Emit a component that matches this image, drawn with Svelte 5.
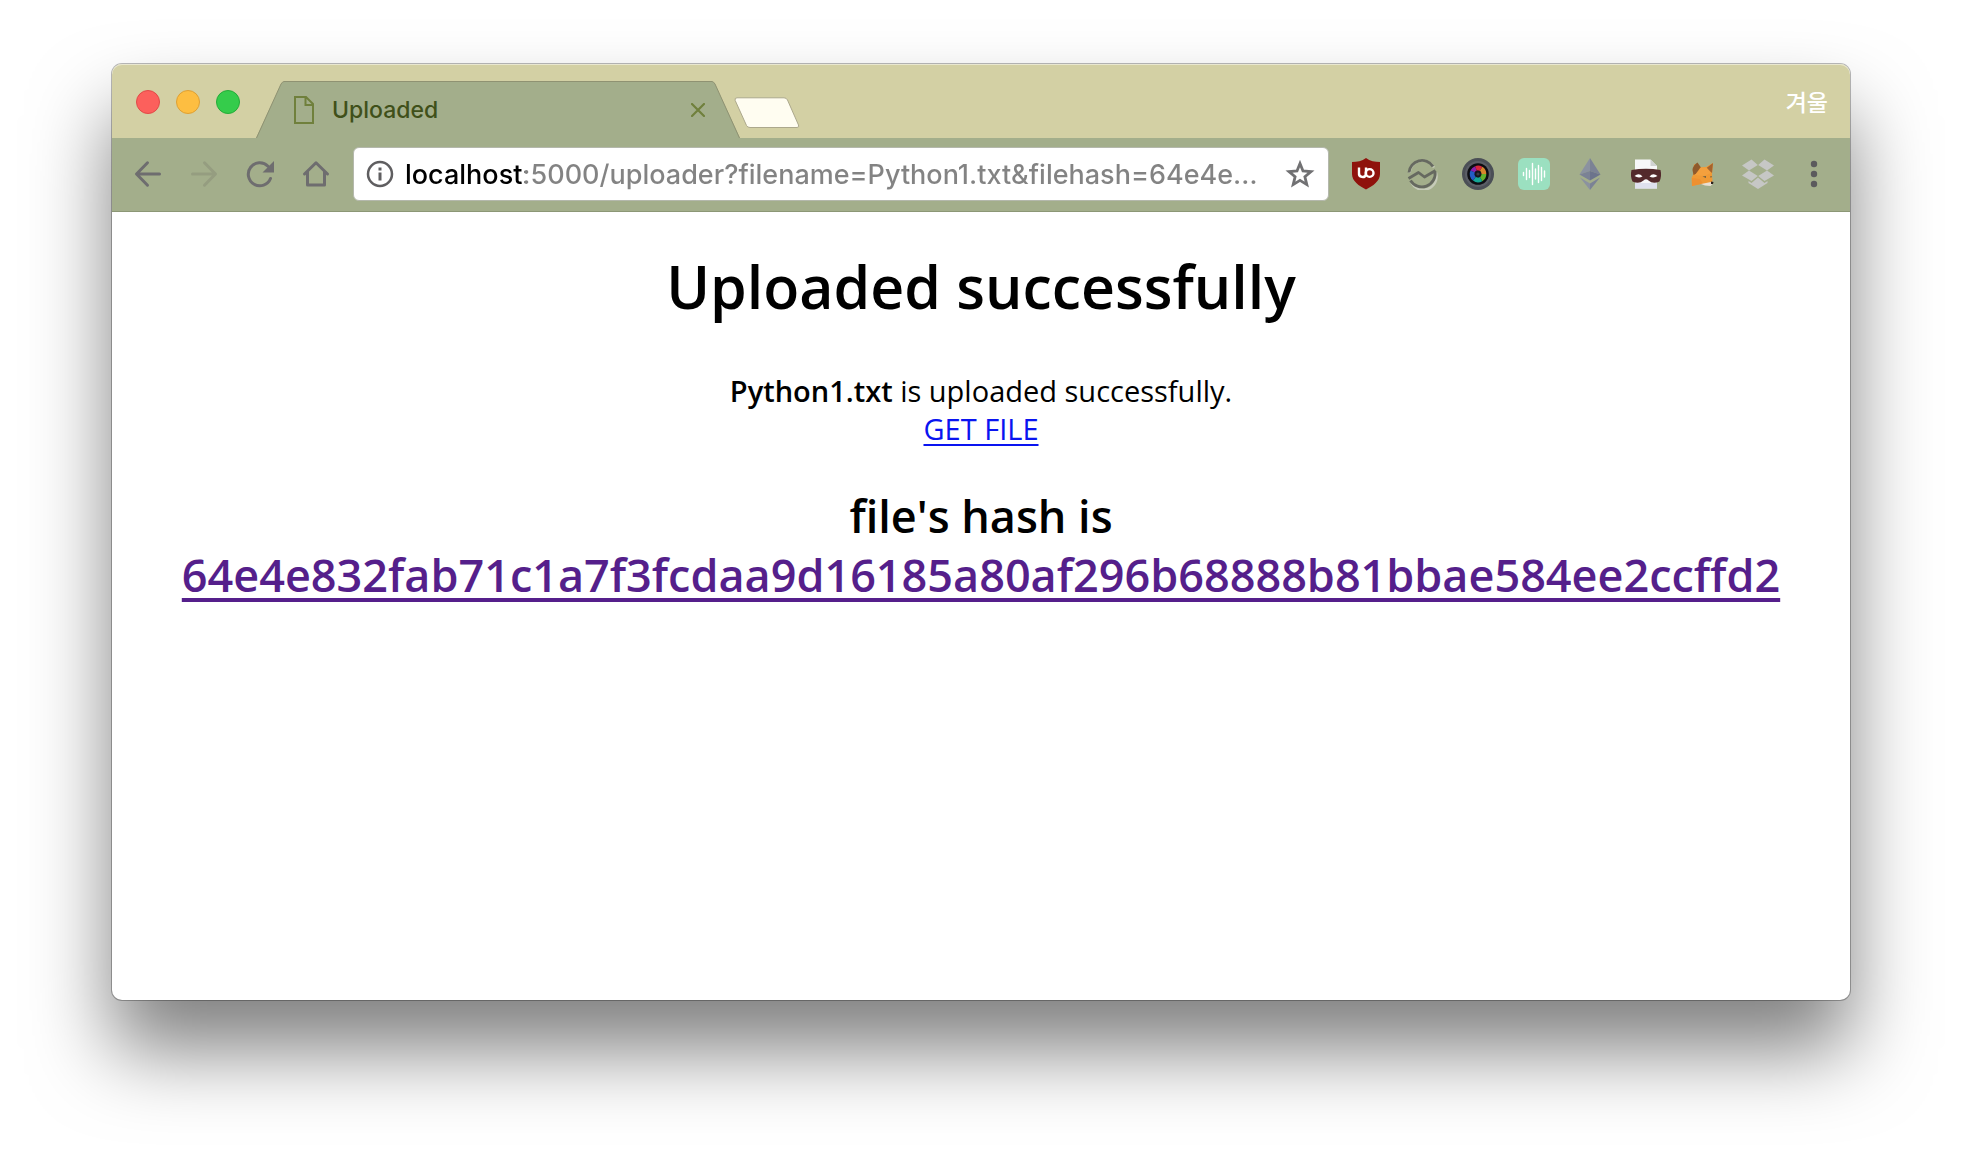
<script>
  const filename = 'Python1.txt';
  const hash = '64e4e832fab71c1a7f3fcdaa9d16185a80af296b68888b81bbae584ee2ccffd2';
  let url = $state(`localhost:5000/uploader?filename=${filename}&filehash=${hash}`);
</script>

<div class="desktop">
  <div class="window">
    <header class="tabstrip">
      <div class="lights">
        <button class="light close" aria-label="Close window"></button>
        <button class="light minimize" aria-label="Minimize window"></button>
        <button class="light zoom" aria-label="Zoom window"></button>
      </div>
      <div class="tab">
        <svg class="slope" width="28" height="57" viewBox="0 0 28 57" aria-hidden="true">
          <path d="M0 57 L25 3 Q26.500 0.500 28 .5 V57 Z" fill="#a3ae8b" />
          <path d="M.5 57 L25 3 Q26.500 .5 28 .5" fill="none" stroke="#8f9272" />
        </svg>
        <div class="tab-body">
          <svg width="20" height="28" viewBox="0 0 20 28" fill="none" stroke="#70803c" stroke-width="2" aria-hidden="true">
            <path d="M1 1 H12 L19 8 V27 H1 Z M11.500 1 V9 H19" />
          </svg>
          <span class="tab-title">Uploaded</span>
          <button class="tab-close" aria-label="Close tab">
            <svg width="14" height="14" viewBox="0 0 14 14" fill="none" stroke="#70803c" stroke-width="2.2" stroke-linecap="round">
              <path d="M1 1 L13 13 M13 1 L1 13" />
            </svg>
          </button>
        </div>
        <svg class="slope" width="28" height="57" viewBox="0 0 28 57" aria-hidden="true">
          <path d="M28 57 L3 3 Q1.500 .5 0 .5 V57 Z" fill="#a3ae8b" />
          <path d="M27.500 57 L3 3 Q1.500 .5 0 .5" fill="none" stroke="#8f9272" />
        </svg>
      </div>
      <button class="new-tab" aria-label="New tab">
        <svg width="66" height="32" viewBox="0 0 66 32">
          <path d="M3 .8 H50 Q52.500 .8 53.500 3 L64.500 28 Q65.500 30.500 63 30.500 H16 Q13.500 30.500 12.500 28.500 L1.200 3.500 Q.4 .8 3 .8 Z" fill="#fffdf1" stroke="#aca88c" />
        </svg>
      </button>
      <button class="profile">겨울</button>
    </header>

    <nav class="toolbar" aria-label="Browser toolbar">
      <button class="tool" aria-label="Back">
        <svg width="28" height="28" viewBox="0 0 28 28" fill="none" stroke="#6e6d6f" stroke-width="3" stroke-linecap="round" stroke-linejoin="round">
          <path d="M25.500 14 H3 M13.500 2.800 L2.500 14 L13.500 25.200" />
        </svg>
      </button>
      <button class="tool" aria-label="Forward" disabled>
        <svg width="28" height="28" viewBox="0 0 28 28" fill="none" stroke="#959d80" stroke-width="3" stroke-linecap="round" stroke-linejoin="round">
          <path d="M2.500 14 H25 M14.500 2.800 L25.500 14 L14.500 25.200" />
        </svg>
      </button>
      <button class="tool" aria-label="Reload">
        <svg width="28" height="28" viewBox="0 0 28 28" fill="none" stroke="#6e6d6f" stroke-width="3" stroke-linecap="round">
          <path d="M24.500 18.500 A11.500 11.500 0 1 1 22 6.200" />
          <path d="M28 1 V12.500 H16.500 Z" fill="#6e6d6f" stroke="none" />
        </svg>
      </button>
      <button class="tool" aria-label="Home">
        <svg width="28" height="28" viewBox="0 0 28 28" fill="none" stroke="#6e6d6f" stroke-width="3" stroke-linejoin="round" stroke-linecap="round">
          <path d="M2.500 14 L14 2.800 L25.500 14 M5.500 12 V25 H22.500 V12" />
        </svg>
      </button>

      <div class="omnibox">
        <button class="site-info" aria-label="View site information">
          <svg width="28" height="28" viewBox="0 0 28 28">
            <circle cx="14" cy="14" r="12" fill="none" stroke="#5f5e60" stroke-width="2.500" />
            <path d="M12.500 7.600 h3 v3 h-3 Z M12.500 12.600 h3 v8 h-3 Z" fill="#5f5e60" />
          </svg>
        </button>
        <input class="url" type="text" aria-label="Address" bind:value={url} />
        <button class="star" aria-label="Bookmark this page">
          <svg width="30" height="28" viewBox="0 0 30 28" fill="none" stroke="#717173" stroke-width="2.800">
            <path d="M15 3.500 L18 11 L26 11.600 L19.900 16.800 L21.800 24.600 L15 20.400 L8.200 24.600 L10.100 16.800 L4 11.600 L12 11 Z" />
          </svg>
        </button>
      </div>

      <button class="tool" aria-label="uBlock Origin">
        <svg width="32" height="32" viewBox="0 0 32 32">
          <path d="M16 0 C12 3 7 4 2 4 V16 C2 23 9 28 16 31.500 C23 28 30 23 30 16 V4 C25 4 20 3 16 0 Z" fill="#8f120c" />
          <path d="M9 9.500 V15 A3.600 3.600 0 0 0 16 16.500 V9.500" fill="none" stroke="#fff" stroke-width="2.400" />
          <circle cx="19.600" cy="15" r="3.900" fill="none" stroke="#fff" stroke-width="2.400" />
        </svg>
      </button>
      <button class="tool" aria-label="Chart extension">
        <svg width="32" height="32" viewBox="0 0 32 32" fill="none" stroke-linejoin="round">
          <g stroke="#c6cbb9" stroke-width="2.400">
            <path d="M3.500 15 A13 13 0 0 1 28 9.500 M30 14.500 A13.300 13.300 0 0 1 5 23.500" />
          </g>
          <g stroke="#666960" stroke-width="2.800">
            <path d="M3 14.500 A13 13 0 0 1 27 8.500 M29 13.500 A13.300 13.300 0 0 1 4.500 22.500 M2.500 20.500 L12.500 14.500 L18.500 19 L29.500 12.500" />
          </g>
        </svg>
      </button>
      <button class="tool" aria-label="Camera extension">
        <svg width="32" height="32" viewBox="0 0 32 32" fill="none">
          <circle cx="16" cy="16" r="16" fill="#4b4f56" />
          <circle cx="16" cy="16" r="13" fill="#5b5e66" />
          <circle cx="16" cy="16" r="10.800" fill="#0d0d12" />
          <g stroke-width="5">
            <path d="M10.700 13.500 A5.800 5.800 0 0 1 14 10.500" stroke="#8a1fae" />
            <path d="M14 10.500 A5.800 5.800 0 0 1 19 11" stroke="#d8263c" />
            <path d="M19 11 A5.800 5.800 0 0 1 21.800 16" stroke="#d8862b" />
            <path d="M21.800 16 A5.800 5.800 0 0 1 19 21" stroke="#63b22c" />
            <path d="M19 21 A5.800 5.800 0 0 1 12.500 20.600" stroke="#15a695" />
            <path d="M12.500 20.600 A5.800 5.800 0 0 1 10.700 13.500" stroke="#245cc4" />
          </g>
          <circle cx="16" cy="16" r="3.400" fill="#15151d" />
          <circle cx="16" cy="16" r="1.600" fill="#3a3a44" />
        </svg>
      </button>
      <button class="tool" aria-label="Audio extension">
        <svg width="32" height="32" viewBox="0 0 32 32">
          <rect width="32" height="32" rx="6" fill="#9be0c0" />
          <path d="M5.500 14.500 V17.500 M8.500 10.500 V21.500 M11.500 12.500 V19.500 M14.500 5.500 V26.500 M17.500 11 V21 M20.500 7.500 V24.500 M23.500 9.500 V22.500 M26.500 13 V19" stroke="#fff" stroke-width="1.400" stroke-linecap="round" />
        </svg>
      </button>
      <button class="tool" aria-label="Ethereum extension">
        <svg width="32" height="32" viewBox="0 0 32 32">
          <path d="M16 0 L5.500 16.500 L16 13 Z" fill="#8b92a0" />
          <path d="M16 0 L26.500 16.500 L16 13 Z" fill="#7b8295" />
          <path d="M5.500 16.500 L16 13 V22.500 Z" fill="#7b8295" />
          <path d="M26.500 16.500 L16 13 V22.500 Z" fill="#6c748c" />
          <path d="M6 19.500 L16 25.500 V32 Z" fill="#8b92a0" />
          <path d="M26 19.500 L16 25.500 V32 Z" fill="#7b8295" />
        </svg>
      </button>
      <button class="tool" aria-label="Privacy extension">
        <svg width="32" height="32" viewBox="0 0 32 32">
          <path d="M5 1.500 H20.500 L27 8 V30.500 H5 Z" fill="#f7f7f9" />
          <path d="M20.500 1.500 L27 8 H20.500 Z" fill="#d0d2d2" />
          <path d="M5 25 H27 V30.500 H5 Z" fill="#dfe1ee" />
          <path d="M1.500 12 Q16 9.500 30.500 12 Q32 18 29.500 23.500 Q23 26.500 18.500 22.500 Q16 20 13.500 22.500 Q9 26.500 2.500 23.500 Q0 18 1.500 12 Z" fill="#532a2c" />
          <path d="M4.500 18 Q9 14.500 12.500 18.500 Q8.500 20.500 4.500 18 Z M27.500 18 Q23 14.500 19.500 18.500 Q23.500 20.500 27.500 18 Z" fill="#fff" />
        </svg>
      </button>
      <button class="tool" aria-label="MetaMask">
        <svg width="32" height="32" viewBox="0 0 32 32">
          <path d="M8 6 L14.500 9.500 L20 9 L27 5 L26 16 L26.500 23 L24 27.500 L15 26 L6 28 L5.500 20 L7 17 Z" fill="#f09a35" />
          <path d="M11.500 4.500 L15 9.500 L14 14 L7.500 17 L6.500 12 Q7 7 11.500 4.500 Z" fill="#8f5a2c" />
          <path d="M27 5 L20.500 10 L26 15 Z" fill="#a5632d" />
          <path d="M14.500 9.500 L20.500 9.500 L25 15 L18 18 L9 17 Z" fill="#f4a03d" />
          <path d="M6 20 L14 21 L17 25.500 L6 28 Z" fill="#ee9030" />
          <path d="M15 26 L25 24 L26.500 26 L24.500 28 L19 27.500 Z" fill="#e9dfd3" />
          <path d="M25 23.500 L27.500 24 L27 26 L25 26 Z" fill="#2b211e" />
          <path d="M16.500 18.500 L20 18 L20 20 Z M24 18.500 L26 18 L25 20 Z" fill="#6d6044" />
        </svg>
      </button>
      <button class="tool" aria-label="Dropbox">
        <svg width="32" height="32" viewBox="0 0 32 32" fill="#c6c7c5">
          <path d="M9.500 1.500 L15.800 7 L7 12.500 L0 7.500 Z M22.500 1.500 L32 7.500 L25 12.500 L16.200 7 Z M7 12.500 L15.800 18 L9.500 23 L0 17.500 Z M25 12.500 L32 17.500 L22.500 23 L16.200 18 Z" />
          <path d="M6.500 23 L9.500 25 L16 19.500 L22.500 25 L25.500 23 V25 L16 31 L6.500 25 Z" />
        </svg>
      </button>
      <button class="tool" aria-label="Menu">
        <svg width="32" height="32" viewBox="0 0 32 32" fill="#5b5a5d">
          <circle cx="16" cy="6" r="3.200" /><circle cx="16" cy="16" r="3.200" /><circle cx="16" cy="26" r="3.200" />
        </svg>
      </button>
    </nav>

    <main class="page">
      <h1>Uploaded successfully</h1>
      <p>
        <strong>{filename}</strong> is uploaded successfully.<br />
        <a class="get" href="#file">GET FILE</a>
      </p>
      <h2>file's hash is<br /><a class="hash" href="#hash">{hash}</a></h2>
    </main>
  </div>
</div>

<style>
  :global(body) {
    margin: 0;
    background: #fff;
  }

  .desktop {
    box-sizing: border-box;
    min-height: 100vh;
    padding: 64px 112px 160px;
    display: flex;
    overflow: hidden;
    font-family: Inter, "Noto Sans CJK KR", sans-serif;
  }

  .window {
    flex: 1;
    min-width: 0;
    display: flex;
    flex-direction: column;
    background: #fff;
    border-radius: 10px;
    box-shadow:
      0 0 0 1px rgba(0, 0, 0, 0.27),
      0 50px 80px rgba(0, 0, 0, 0.5);
  }

  button {
    padding: 0;
    border: 0;
    background: none;
    font: inherit;
    display: grid;
    place-items: center;
    flex: none;
  }

  svg {
    display: block;
  }

  .tabstrip {
    height: 74px;
    display: flex;
    align-items: flex-end;
    background: #d3d0a4;
    border-radius: 10px 10px 0 0;
    box-shadow: inset 0 1px #e9e7d0;
  }

  .lights {
    align-self: center;
    display: flex;
    gap: 16px;
    padding: 2px 16px 0 24px;
  }

  .light {
    box-sizing: border-box;
    width: 24px;
    height: 24px;
    border: 1px solid;
    border-radius: 50%;
  }

  .close {
    background: #fc605c;
    border-color: #e24a47;
  }

  .minimize {
    background: #fdbe41;
    border-color: #dfa033;
  }

  .zoom {
    background: #35cc4b;
    border-color: #24ac38;
  }

  .tab {
    display: flex;
    flex: 0 1 484px;
    min-width: 0;
  }

  .slope {
    flex: none;
  }

  .tab-body {
    box-sizing: border-box;
    height: 57px;
    flex: 1;
    min-width: 0;
    display: flex;
    align-items: center;
    padding: 0 7px 0 10px;
    background: #a3ae8b;
    border-top: 1px solid #8f9272;
    color: #40501a;
    font-size: 23px;
    font-weight: 500;
  }

  .tab-title {
    flex: 1;
    padding-left: 18px;
    line-height: 28px;
  }

  .new-tab {
    height: 32px;
    margin: 0 0 9px -6px;
  }

  .profile {
    align-self: center;
    margin: 0 22px 0 auto;
    padding-top: 4px;
    color: #fff;
    font-size: 23px;
    font-weight: 500;
    line-height: 32px;
  }

  .toolbar {
    box-sizing: border-box;
    height: 74px;
    padding: 0 8px 1px;
    display: flex;
    align-items: center;
    background: #a3ae8b;
    border-bottom: 1px solid #8c9776;
  }

  .tool {
    width: 56px;
    height: 56px;
  }

  .omnibox {
    box-sizing: border-box;
    height: 54px;
    flex: 1;
    min-width: 0;
    margin: 0 9px;
    padding: 0 13px 0 12px;
    display: flex;
    align-items: center;
    background: #fff;
    border: 1px solid #b4b8ac;
    border-radius: 6px;
  }

  .url {
    flex: 1;
    min-width: 0;
    height: 40px;
    margin: 0 20px 0 11px;
    padding: 0;
    border: 0;
    outline: 0;
    font: 500 27px Inter, sans-serif;
    color: transparent;
    caret-color: #000;
    background: linear-gradient(90deg, #000 120px, #838383 120px);
    background-clip: text;
    text-overflow: ellipsis;
  }

  .page {
    flex: 1;
    padding: 34px 24px 40px;
    text-align: center;
    font-family: "Open Sans", sans-serif;
    color: #000;
  }

  h1 {
    margin: 0 0 46px;
    font-size: 59px;
    font-weight: 600;
    line-height: 80px;
  }

  p {
    margin: 0 0 38px;
    font-size: 29px;
    line-height: 38px;
  }

  strong {
    font-weight: 600;
  }

  h2 {
    margin: 0;
    font-size: 45px;
    font-weight: 600;
    line-height: 59px;
    overflow-wrap: anywhere;
  }

  a {
    text-decoration: underline;
    text-decoration-skip-ink: none;
  }

  .get {
    color: #0a14f0;
    text-decoration-thickness: 2px;
    text-underline-offset: 4px;
  }

  .hash {
    color: #551f8b;
    text-decoration-thickness: 4px;
    text-underline-offset: 6px;
  }
</style>
